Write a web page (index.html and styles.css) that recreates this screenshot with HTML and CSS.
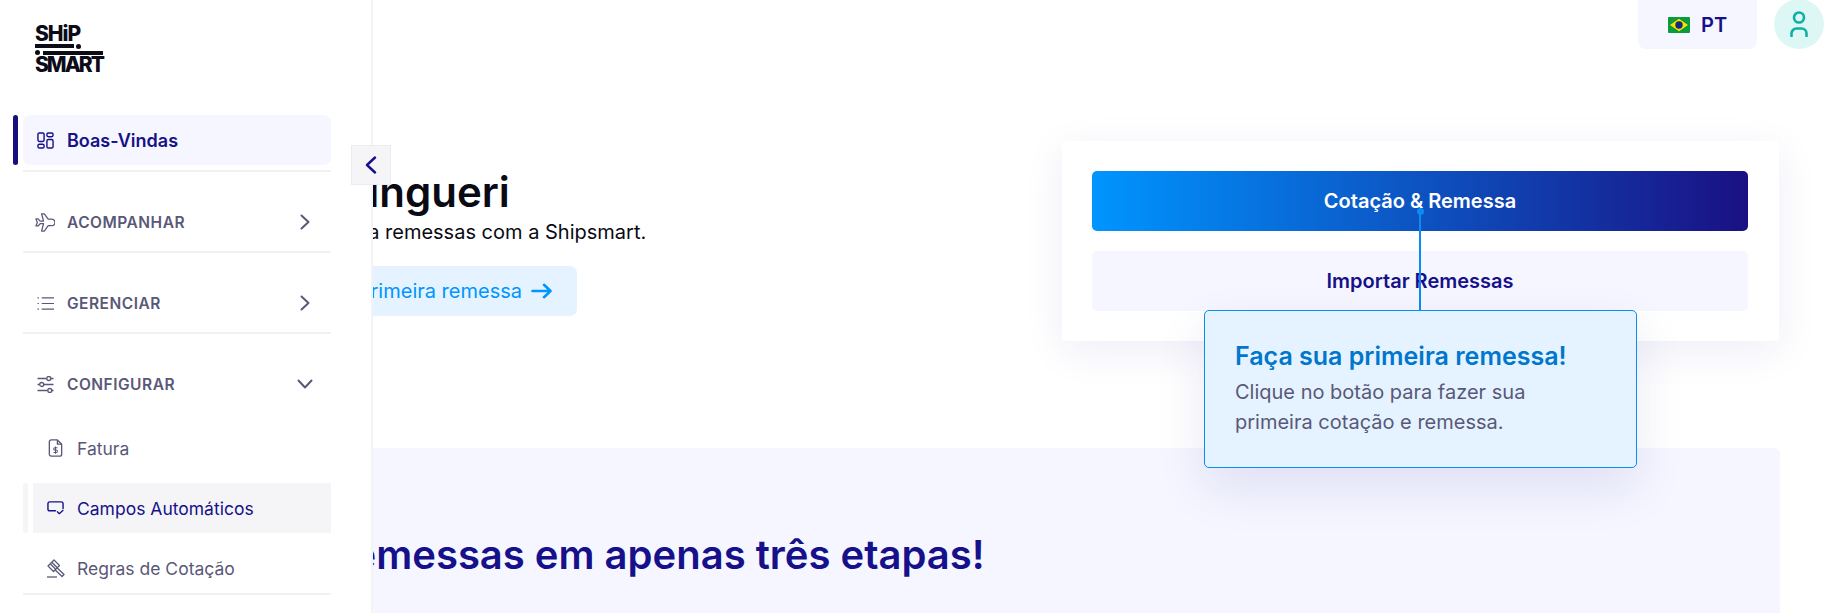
FILE: index.html
```html
<!DOCTYPE html>
<html lang="pt">
<head>
<meta charset="utf-8">
<title>Shipsmart</title>
<link rel="stylesheet" href="styles.css">
</head>
<body>
<div class="app">
  <aside class="sidebar">
    <div class="logo">
      <div class="logo-word">SHiP</div>
      <div class="logo-line line-a"><span class="bar bar-a"></span><span class="dot"></span></div>
      <div class="logo-line line-b"><span class="dot"></span><span class="bar bar-b"></span></div>
      <div class="logo-word logo-word-b">SMART</div>
    </div>
    <nav class="nav">
      <div class="row-active">
        <span class="marker marker-active"></span>
        <a class="item item-active">
          <svg class="icon" viewBox="0 0 18 18" fill="none" stroke="currentColor" stroke-width="1.5"><rect x="1" y="1" width="6.500" height="9" rx="1.5"/><rect x="10.500" y="1" width="6.500" height="4" rx="1.5"/><rect x="1" y="13" width="6.500" height="4" rx="1.5"/><rect x="10.500" y="8" width="6.500" height="9" rx="1.5"/></svg>
          <span>Boas-Vindas</span>
        </a>
      </div>
      <div class="divider first"></div>

      <a class="section">
        <svg class="icon wide" viewBox="0 0 20 19.500" fill="none" stroke="currentColor" stroke-width="1.3" stroke-linejoin="round"><path d="M.7 6h2.300l2 2.300h3.500L6.500.8h2.800l4 5.600h3.500a3.300 3.300 0 0 1 0 6.600h-3.500l-4 5.500H6.500l2-7.500H5l-2 2.300H.7l1.400-3.650z"/></svg>
        <span>ACOMPANHAR</span>
        <svg class="chev" viewBox="0 0 10 16" fill="none" stroke="currentColor" stroke-width="2" stroke-linecap="round" stroke-linejoin="round"><path d="M1.500 1.500 8.500 8l-7 6.500"/></svg>
      </a>
      <div class="divider"></div>

      <a class="section">
        <svg class="icon" viewBox="0 0 18 14" fill="none" stroke="currentColor" stroke-width="1.300"><path d="M5 1h13M5 7h13M5 13h13"/><path d="M.5 1h1.500M.5 7h1.500M.5 13h1.500"/></svg>
        <span>GERENCIAR</span>
        <svg class="chev" viewBox="0 0 10 16" fill="none" stroke="currentColor" stroke-width="2" stroke-linecap="round" stroke-linejoin="round"><path d="M1.500 1.500 8.500 8l-7 6.500"/></svg>
      </a>
      <div class="divider"></div>

      <a class="section">
        <svg class="icon" viewBox="0 0 17 17" fill="none" stroke="currentColor" stroke-width="1.300"><path d="M.5 2.500h9M14 2.500h2.500M.5 8.500h2M7 8.500h9.500M.5 14.500h10M15 14.500h1.500"/><circle cx="11.800" cy="2.500" r="2"/><circle cx="4.700" cy="8.500" r="2"/><circle cx="12.800" cy="14.500" r="2"/></svg>
        <span>CONFIGURAR</span>
        <svg class="chev-down" viewBox="0 0 16 10" fill="none" stroke="currentColor" stroke-width="2" stroke-linecap="round" stroke-linejoin="round"><path d="M1.500 1.500 8 8.500l6.500-7"/></svg>
      </a>

      <div class="sub">
        <a class="sub-item">
          <svg class="sub-icon" viewBox="0 0 15 19" fill="none" stroke="currentColor" stroke-width="1.400" stroke-linejoin="round"><path d="M3 1h6.500L14 5.500V16a2 2 0 0 1-2 2H3a2 2 0 0 1-2-2V3a2 2 0 0 1 2-2z"/><path d="M9.500 1v4.500H14"/><path d="M9.500 9.200H6.800a1.200 1.200 0 0 0 0 2.500h1.500a1.200 1.200 0 0 1 0 2.500H5.500M7.500 8v7.500" stroke-width="1.100"/></svg>
          <span>Fatura</span>
        </a>
        <div class="row-sub">
          <span class="marker marker-sub"></span>
          <a class="sub-item sub-current">
            <svg class="sub-icon" viewBox="0 0 18 15" fill="none" stroke="currentColor" stroke-width="1.500" stroke-linecap="round" stroke-linejoin="round"><path d="M9 10.500H3a2 2 0 0 1-2-2V3a2 2 0 0 1 2-2h12a2 2 0 0 1 2 2v5"/><path d="M11 11.500l2 2 4-3.500" stroke-width="1.400"/></svg>
            <span>Campos Automáticos</span>
          </a>
        </div>
        <a class="sub-item">
          <svg class="sub-icon gavel" viewBox="0 0 19 19" fill="none" stroke="currentColor" stroke-width="1.300" stroke-linejoin="round"><path d="M1 18h10"/><path d="M8 1l5.500 5.500-6 6L2 7z"/><path d="M5.800 3.200l5.500 5.500M4.200 4.800l5.500 5.500"/><path d="M11 8.800l7 6.700-2 2-7-6.800"/></svg>
          <span>Regras de Cotação</span>
        </a>
      </div>
      <div class="divider flush"></div>
    </nav>
    <button class="collapse" type="button" aria-label="Recolher menu">
      <svg viewBox="0 0 12 18" fill="none" stroke="currentColor" stroke-width="2.400" stroke-linecap="round" stroke-linejoin="round"><path d="M10 1.500 2 9l8 7.500"/></svg>
    </button>
  </aside>

  <main class="main">
    <header class="topbar">
      <div class="lang">
        <svg class="flag" viewBox="0 0 22 16"><rect width="22" height="16" rx="1" fill="#0a9b3c"/><path d="M11 1.800 20 8l-9 6.200L2 8z" fill="#fedf00"/><circle cx="11" cy="8" r="3.700" fill="#122a7a"/></svg>
        <span>PT</span>
      </div>
      <div class="avatar">
        <svg viewBox="0 0 18 26" fill="none" stroke="#0fb0a4" stroke-width="2.600" stroke-linecap="round"><circle cx="9" cy="6.500" r="5"/><path d="M1.500 25v-2.500a5 5 0 0 1 5-5h5a5 5 0 0 1 5 5V25"/></svg>
      </div>
    </header>

    <section class="hero">
      <div class="intro">
        <h1>Olá, Mingueri</h1>
        <p>Faça remessas com a Shipsmart.</p>
        <a class="cta">
          <span>Faça sua primeira remessa</span>
          <svg viewBox="0 0 21 16" fill="none" stroke="currentColor" stroke-width="2.600" stroke-linecap="round" stroke-linejoin="round"><path d="M1.500 8h18M13 1.800 19.500 8 13 14.200"/></svg>
        </a>
      </div>
      <div class="card">
        <a class="btn btn-primary">Cotação &amp; Remessa</a>
        <a class="btn btn-soft">Importar Remessas</a>
        <div class="tip-line"></div>
        <div class="tip">
          <h3>Faça sua primeira remessa!</h3>
          <p>Clique no botão para fazer sua primeira cotação e remessa.</p>
        </div>
      </div>
    </section>

    <section class="steps">
      <h2>Remessas em apenas três etapas!</h2>
    </section>
  </main>
</div>
</body>
</html>
```
FILE: styles.css
```css
* { box-sizing: border-box; }
html, body { margin: 0; height: 613px; overflow: hidden; background: #fff; }
body { font-family: Inter, "Noto Sans", sans-serif; color: #0a0a14; }
a { color: inherit; text-decoration: none; }
h1, h2, h3, p { margin: 0; }

.app { display: flex; height: 613px; width: 1829px; overflow: hidden; }

/* sidebar */
.sidebar {
  position: relative; z-index: 2; flex: 0 0 373px; height: 613px;
  background: #fff; border-right: 2px solid #f3f3f6;
  padding: 26px 0 0 13px;
}
.logo { width: 68px; margin-left: 22px; height: 89px; color: #0c0c18; }
.logo-word { font-size: 21px; line-height: 15px; font-weight: 800; letter-spacing: -1px; height: 15px; white-space: nowrap; }
.logo-word-b { letter-spacing: -2px; margin-top: 2px; }
.logo-line { display: flex; align-items: center; height: 5px; }
.line-a { margin-top: 2.500px; gap: 2px; }
.line-b { margin-top: 1.500px; gap: 3px; }
.bar { display: block; height: 4px; background: #0c0c18; }
.bar-a { width: 39px; }
.bar-b { width: 60px; }
.dot { display: block; width: 5px; height: 5px; border-radius: 50%; background: #0c0c18; }

.nav { width: 318px; color: #5a5878; }
.row-active, .row-sub { display: flex; gap: 5px; }
.marker { display: block; flex: none; width: 5px; height: 50px; border-radius: 3px; }
.marker-active { background: #16107f; }
.marker-sub { background: #f5f5f8; }
.item {
  flex: 1; display: flex; align-items: center; gap: 13px; height: 50px;
  padding-left: 14px; background: #f5f6ff; border-radius: 7px;
  font-size: 18px; font-weight: 600; color: #16118a;
}
.icon { flex: none; width: 17px; height: 17px; }
.icon.wide { width: 20px; height: 19px; margin-left: -2px; margin-right: -1px; }
.divider { height: 2px; margin: 0 0 25px 10px; background: #f1f1f4; }
.divider.first { margin-top: 5px; }
.divider.flush { margin-bottom: 0; }
.section {
  display: flex; align-items: center; gap: 13px; height: 50px;
  margin: 0 0 4px 10px; padding-left: 14px;
  font-size: 15.500px; font-weight: 600; letter-spacing: .5px;
}
.chev { flex: none; width: 10px; height: 16px; margin-left: auto; margin-right: 21px; }
.chev-down { flex: none; width: 16px; height: 10px; margin-left: auto; margin-right: 18px; }
.sub { margin: 14px 0 0; display: flex; flex-direction: column; gap: 10px; }
.sub-item {
  display: flex; align-items: center; gap: 13px; height: 50px;
  margin-left: 20px; padding-left: 14px; font-size: 17.500px; width: 298px;
}
.row-sub { margin-left: 10px; }
.row-sub .sub-item { margin-left: 0; }
.sub-current { background: #f5f5f8; color: #16118a; }
.sub-icon { flex: none; width: 17px; height: 18px; }
.gavel { width: 19px; height: 19px; margin-left: -1px; margin-right: -1px; }
.collapse {
  position: absolute; left: 351px; top: 145px; width: 40px; height: 40px; padding: 0;
  display: flex; align-items: center; justify-content: center;
  background: #f5f5f8; border: 1px solid #ececf0; color: #16118a;
}
.collapse svg { width: 12px; height: 18px; }

/* main */
.main { flex: 1; margin-left: -300px; padding-right: 49px; min-width: 0; }
.topbar { display: flex; justify-content: flex-end; align-items: flex-start; gap: 17px; height: 49px; margin-right: -44px; }
.lang {
  display: flex; align-items: center; gap: 11px; width: 119px; height: 49px; padding-left: 30px;
  background: #f5f6ff; border-radius: 0 0 8px 8px;
  font-size: 20px; font-weight: 600; color: #16118a;
}
.flag { width: 22px; height: 16px; }
.avatar {
  display: flex; align-items: center; justify-content: center; width: 50px; height: 50px; margin-top: -1px;
  background: #ddf7f5; border-radius: 50%;
}
.avatar svg { width: 18px; height: 26px; }

.hero { display: flex; justify-content: space-between; margin-top: 92px; height: 200px; }
.intro { padding: 24px 0 0 166px; }
.intro h1 { font-size: 42px; line-height: 53px; font-weight: 600; color: #0a0a14; white-space: nowrap; }
.intro p { font-size: 20px; line-height: 28px; color: #0a0a14; margin-left: 95px; white-space: nowrap; }
.cta {
  display: inline-flex; align-items: center; gap: 9px; height: 50px; margin: 20px 0 0 9px; padding: 0 25px 0 20px;
  background: #e4f3ff; border-radius: 7px; color: #0095ff; font-size: 20px; white-space: nowrap;
}
.cta svg { width: 21px; height: 16px; }

.card {
  position: relative; flex: none; width: 717px; height: 200px; margin-right: 1px; padding: 30px 31px 30px 30px;
  background: #fff; border-radius: 4px; box-shadow: 0 10px 40px rgba(40,30,150,.08);
  display: flex; flex-direction: column; gap: 20px;
}
.btn {
  display: flex; align-items: center; justify-content: center; height: 60px; padding-bottom: 1px; border-radius: 5px;
  font-size: 20px; font-weight: 600;
}
.btn-primary { background: linear-gradient(90deg, #0095ff, #1a1083); color: #fff; }
.btn-soft { background: #f5f6ff; color: #16118a; }
.tip-line {
  position: absolute; left: 357px; top: 71px; width: 2px; height: 98px; background: #0a8cf0;
}
.tip-line::before {
  content: ""; position: absolute; left: -2.500px; top: -4px; width: 7px; height: 7px; border-radius: 50%; background: #0a8cf0;
}
.tip {
  position: absolute; left: 142px; top: 169px; width: 433px; height: 158px; padding: 30px 30px 0;
  background: #e4f3ff; border: 1px solid #0a8cf0; border-radius: 5px;
  box-shadow: 0 20px 50px rgba(40,30,150,.1);
}
.tip h3 { font-size: 25px; line-height: 30px; font-weight: 600; color: #0077cc; white-space: nowrap; }
.tip p { font-size: 20px; line-height: 30px; color: #5a5878; width: 350px; margin-top: 6px; }

.steps {
  height: 165px; margin-top: 107px; padding: 83px 0 0 254px;
  background: #f5f6ff; border-radius: 6px 6px 0 0;
}
.steps h2 { font-size: 40px; line-height: 48px; font-weight: 600; color: #16118a; white-space: nowrap; }
```
